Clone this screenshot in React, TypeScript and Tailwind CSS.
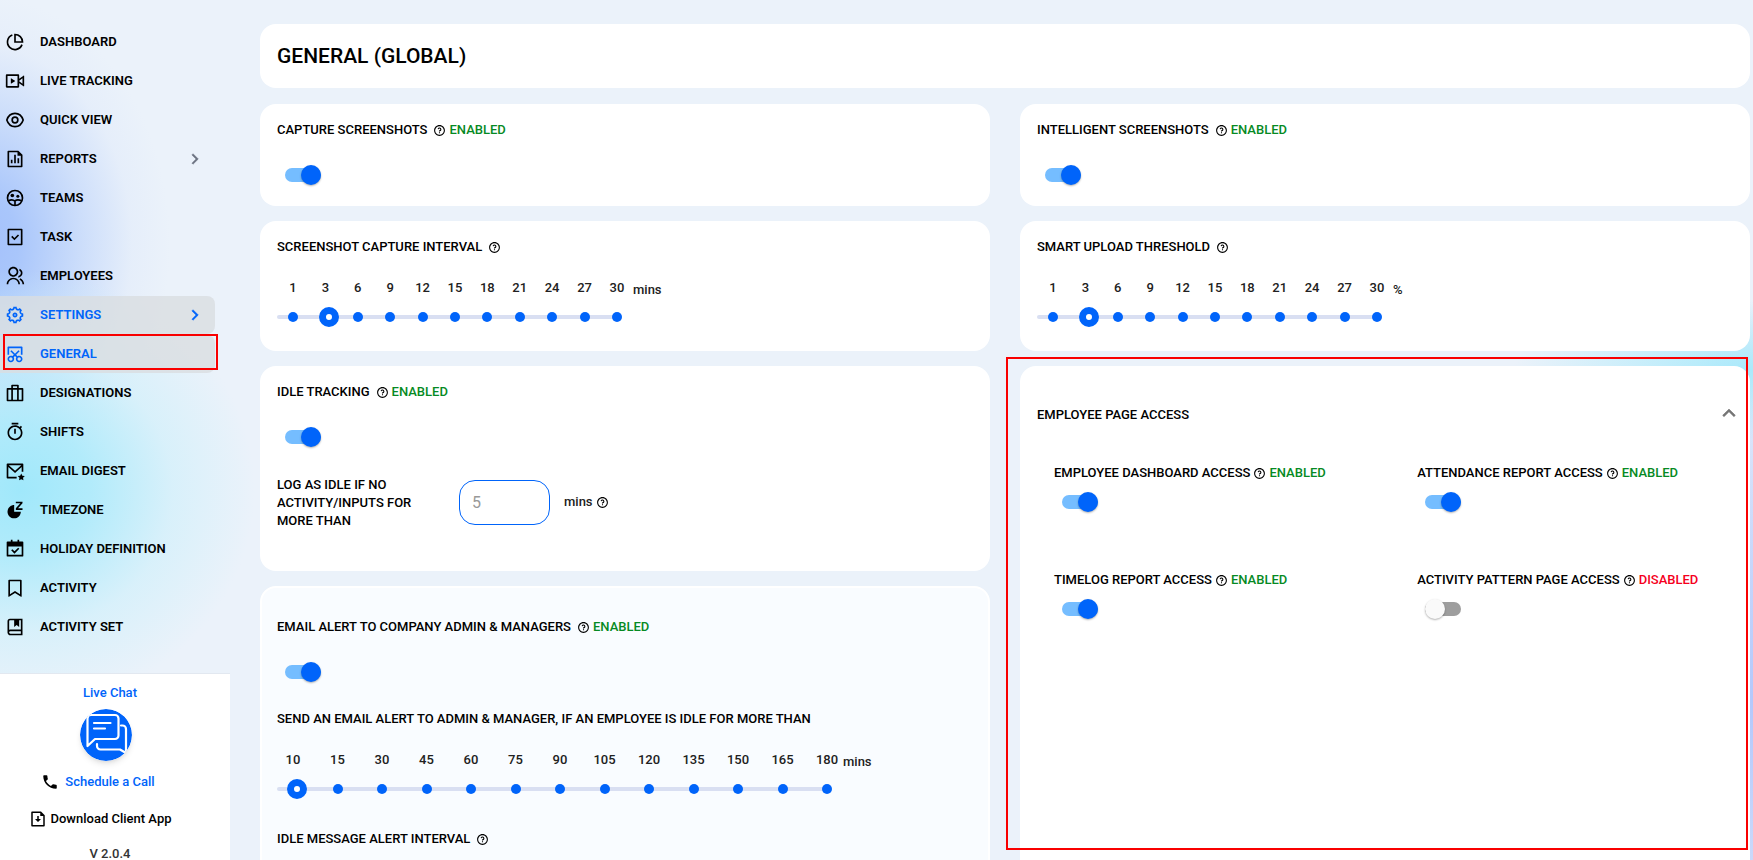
import { useState, type ReactNode, type ComponentType } from "react";
import {
  RiLiveLine,
  RiFileChartLine,
  RiTaskLine,
  RiGroupLine,
  RiSettings5Line,
  RiScreenshotLine,
  RiTimerLine,
  RiMailStarLine,
  RiRestTimeFill,
  RiBookmarkLine,
  RiFileDownloadLine,
  RiQuestionLine,
  RiArrowRightSLine,
  RiArrowUpSLine,
} from "react-icons/ri";
import { MdPhone } from "react-icons/md";

type IconProps = { className?: string };

function PieIcon({ className }: IconProps) {
  return (
    <svg viewBox="0 0 24 24" className={className} fill="none" stroke="currentColor" strokeWidth="2">
      <path d="M8.800 3.600A9 9 0 1 0 20.400 15.200" />
      <path d="M12 12V3a9 9 0 0 1 9 9z" />
    </svg>
  );
}

function EyeIcon({ className }: IconProps) {
  return (
    <svg viewBox="0 0 24 24" className={className} fill="none" stroke="currentColor" strokeWidth="2" strokeLinejoin="round">
      <path d="M2.200 12c1.600-5 5.400-8 9.800-8s8.200 3 9.800 8c-1.600 5-5.400 8-9.800 8s-8.200-3-9.800-8z" />
      <circle cx="12" cy="12" r="3.400" />
    </svg>
  );
}

function TeamsIcon({ className }: IconProps) {
  return (
    <svg viewBox="0 0 24 24" className={className} fill="none" stroke="currentColor" strokeWidth="2">
      <circle cx="12" cy="12" r="9" />
      <circle cx="8.800" cy="9" r="2.200" fill="currentColor" stroke="none" />
      <circle cx="15.400" cy="9.800" r="1.800" fill="currentColor" stroke="none" />
      <path d="M4 15.800c2.400-1.800 5.800-1.800 8 0V21M12 15.200c2-1.200 5.400-1.200 8 .4" />
    </svg>
  );
}

function SuitcaseIcon({ className }: IconProps) {
  return (
    <svg viewBox="0 0 24 24" className={className} fill="none" stroke="currentColor" strokeWidth="2" strokeLinejoin="round">
      <path d="M3 7h18v14H3z" />
      <path d="M8.500 21V3h7v18" />
    </svg>
  );
}

function CalendarCheckIcon({ className }: IconProps) {
  return (
    <svg viewBox="0 0 24 24" className={className} fill="currentColor">
      <path fillRule="evenodd" d="M7 1h2v2h6V1h2v2h4a1 1 0 0 1 1 1v16a1 1 0 0 1-1 1H3a1 1 0 0 1-1-1V4a1 1 0 0 1 1-1h4V1zM4 9v10h16V9H4z" />
      <path d="M8.800 12.200l2.600 2.600 4.400-4.400 1.400 1.400-5.800 5.800-4-4z" />
    </svg>
  );
}

function BookIcon({ className }: IconProps) {
  return (
    <svg viewBox="0 0 24 24" className={className} fill="none" stroke="currentColor" strokeWidth="2">
      <path d="M4 18.500V5a2 2 0 0 1 2-2h14v18H6.500a2.500 2.500 0 0 1 0-5H20" />
      <path d="M11 3h6v9l-3-2.500-3 2.500z" fill="currentColor" stroke="none" />
    </svg>
  );
}

type NavEntry = {
  label: string;
  icon: ComponentType<IconProps>;
  active?: boolean;
  arrow?: boolean;
  outlined?: boolean;
};

const NAV: NavEntry[] = [
  { label: "DASHBOARD", icon: PieIcon },
  { label: "LIVE TRACKING", icon: RiLiveLine },
  { label: "QUICK VIEW", icon: EyeIcon },
  { label: "REPORTS", icon: RiFileChartLine, arrow: true },
  { label: "TEAMS", icon: TeamsIcon },
  { label: "TASK", icon: RiTaskLine },
  { label: "EMPLOYEES", icon: RiGroupLine },
  { label: "SETTINGS", icon: RiSettings5Line, active: true, arrow: true },
  { label: "GENERAL", icon: RiScreenshotLine, active: true, outlined: true },
  { label: "DESIGNATIONS", icon: SuitcaseIcon },
  { label: "SHIFTS", icon: RiTimerLine },
  { label: "EMAIL DIGEST", icon: RiMailStarLine },
  { label: "TIMEZONE", icon: RiRestTimeFill },
  { label: "HOLIDAY DEFINITION", icon: CalendarCheckIcon },
  { label: "ACTIVITY", icon: RiBookmarkLine },
  { label: "ACTIVITY SET", icon: BookIcon },
];

function NavItem({ label, icon: Icon, active, arrow, outlined }: NavEntry) {
  return (
    <li className="relative">
      <a
        href="#"
        className={
          active
            ? "flex h-[38px] items-center rounded-r-lg bg-[#d9dde1]/80 pl-[5px] pr-[10px] text-[#0064fa]"
            : "flex h-[38px] items-center pl-[5px] pr-[10px] text-black"
        }
      >
        <Icon className="size-5" />
        <span className="ml-[15px] flex-1">{label}</span>
        {arrow && (
          <RiArrowRightSLine className={active ? "size-5 stroke-[0.5]" : "size-5 stroke-[0.5] text-[#6b7280]"} />
        )}
      </a>
      {outlined && (
        <span className="pointer-events-none absolute -right-[3px] -top-px bottom-[3px] left-[3px] border-2 border-[#f90000]" />
      )}
    </li>
  );
}

function ChatLogo() {
  return (
    <svg viewBox="0 0 52 52" className="size-[52px] rounded-full shadow-md" fill="none" stroke="#fff" strokeWidth="2.2" strokeLinecap="round" strokeLinejoin="round">
      <circle cx="26" cy="26" r="26" fill="#0064fa" stroke="none" />
      <path d="M7.500 37V9.500a3.500 3.500 0 0 1 3.500-3.500h24a3.500 3.500 0 0 1 3.500 3.500v17a3.500 3.500 0 0 1-3.500 3.500H15z" />
      <path d="M41 16.500h1.500a3.500 3.500 0 0 1 3.500 3.500V44l-6-3.500H20.500a3.500 3.500 0 0 1-3.500-3.500V35" />
      <path d="M14 14h16.500M14 19.500h11" />
    </svg>
  );
}

function Sidebar() {
  return (
    <aside className="flex w-[230px] shrink-0 flex-col text-[13px] font-semibold">
      <nav className="flex-1 overflow-hidden pr-[15px] pt-[23px]">
        <ul className="flex flex-col gap-px">
          {NAV.map((entry) => (
            <NavItem key={entry.label} {...entry} />
          ))}
        </ul>
      </nav>
      <div className="flex h-[187px] flex-col items-center border-t border-[#e2e8f0] bg-white pr-[10px] pt-[9px] font-medium leading-5">
        <a href="#" className="text-[#0064fa]">Live Chat</a>
        <button type="button" aria-label="Live chat" className="mr-2 mt-[6px]">
          <ChatLogo />
        </button>
        <a href="#" className="mr-6 mt-[11px] flex items-center gap-[6px] text-[#0064fa]">
          <MdPhone className="size-[18px] text-black" />
          Schedule a Call
        </a>
        <a href="#" className="mr-5 mt-[17px] flex items-center gap-1 text-black">
          <RiFileDownloadLine className="size-[18px]" />
          Download Client App
        </a>
        <span className="mt-[17px] leading-[15px] text-[#333]">V 2.0.4</span>
      </div>
    </aside>
  );
}

function Help({ label }: { label: string }) {
  return (
    <button type="button" aria-label={`Help: ${label}`} className="flex">
      <RiQuestionLine className="size-[13px]" />
    </button>
  );
}

function Toggle({ id, defaultOn }: { id: string; defaultOn: boolean }) {
  return (
    <input
      id={id}
      type="checkbox"
      role="switch"
      defaultChecked={defaultOn}
      className="relative ml-2 block h-[14px] w-9 appearance-none rounded-full bg-[#9e9e9e] before:absolute before:-top-[3px] before:left-0 before:size-5 before:rounded-full before:bg-[#fafafa] before:shadow-[0_1px_2px_rgba(0,0,0,0.3)] checked:bg-[#75bdff] checked:before:left-4 checked:before:bg-[#0064fa]"
    />
  );
}

function SettingTitle({ id, label, on, tight }: { id?: string; label: string; on?: boolean; tight?: boolean }) {
  return (
    <div className="flex h-[18px] items-center">
      {id ? <label htmlFor={id}>{label}</label> : <h2>{label}</h2>}
      <span className={tight ? "ml-[3px] flex" : "ml-[6px] flex"}>
        <Help label={label} />
      </span>
      {on !== undefined && (
        <span className={on ? "ml-[3px] text-[#068a23]" : "ml-[3px] text-[#f5001d]"}>{on ? "ENABLED" : "DISABLED"}</span>
      )}
    </div>
  );
}

function Card({ children, className = "pb-6" }: { children: ReactNode; className?: string }) {
  return <section className={`rounded-2xl bg-white px-[17px] pt-[17px] ${className}`}>{children}</section>;
}

function StepSlider({ steps, start, unit, label, wide }: { steps: number[]; start: number; unit: string; label: string; wide?: boolean }) {
  const [index, setIndex] = useState(start);
  return (
    <div className="flex items-start text-[#212121]">
      <div className={wide ? "w-[566px]" : "w-[356px]"}>
        <div className="flex h-[18px] justify-between">
          {steps.map((s) => (
            <span key={s} className="w-8 text-center leading-[18px]">{s}</span>
          ))}
        </div>
        <div className="mt-[10px] grid h-5 items-center">
          <div className="col-start-1 row-start-1 mr-4 h-1 rounded-full bg-[#d9dff2]" />
          <div className="col-start-1 row-start-1 flex justify-between">
            {steps.map((s, i) => (
              <span key={s} className="flex w-8 justify-center">
                <span className={i === index ? "size-[10px]" : "size-[10px] rounded-full bg-[#0064fa]"} />
              </span>
            ))}
          </div>
          <input
            type="range"
            aria-label={label}
            min={0}
            max={steps.length - 1}
            value={index}
            onChange={(e) => setIndex(Number(e.target.value))}
            className="col-start-1 row-start-1 ml-[10px] mr-[6px] h-5 appearance-none bg-transparent [&::-webkit-slider-thumb]:size-5 [&::-webkit-slider-thumb]:appearance-none [&::-webkit-slider-thumb]:rounded-full [&::-webkit-slider-thumb]:border-[7px] [&::-webkit-slider-thumb]:border-[#0064fa] [&::-webkit-slider-thumb]:bg-white"
          />
        </div>
      </div>
      <span className="mt-[2px] leading-[18px]">{unit}</span>
    </div>
  );
}

const UP_TO_30 = [1, 3, 6, 9, 12, 15, 18, 21, 24, 27, 30];
const IDLE_STEPS = [10, 15, 30, 45, 60, 75, 90, 105, 120, 135, 150, 165, 180];

const ACCESS = [
  { id: "dashboard-access", label: "EMPLOYEE DASHBOARD ACCESS", on: true },
  { id: "attendance-access", label: "ATTENDANCE REPORT ACCESS", on: true },
  { id: "timelog-access", label: "TIMELOG REPORT ACCESS", on: true },
  { id: "pattern-access", label: "ACTIVITY PATTERN PAGE ACCESS", on: false },
];

function LeftColumn() {
  return (
    <div className="flex flex-col gap-[15px]">
      <Card>
        <SettingTitle id="capture" label="CAPTURE SCREENSHOTS" on />
        <div className="mt-[29px]">
          <Toggle id="capture" defaultOn />
        </div>
      </Card>
      <Card>
        <SettingTitle label="SCREENSHOT CAPTURE INTERVAL" />
        <div className="mt-[23px]">
          <StepSlider steps={UP_TO_30} start={1} unit="mins" label="Screenshot capture interval" />
        </div>
      </Card>
      <Card className="pb-[41px]">
        <SettingTitle id="idle" label="IDLE TRACKING" on />
        <div className="mt-[29px]">
          <Toggle id="idle" defaultOn />
        </div>
        <div className="mt-[32px] flex items-center">
          <label htmlFor="idle-minutes" className="w-[140px] leading-[18px]">
            LOG AS IDLE IF NO ACTIVITY/INPUTS FOR MORE THAN
          </label>
          <div className="mb-[2px] flex items-center">
            <input
              id="idle-minutes"
              type="text"
              placeholder="5"
              className="ml-[42px] h-[45px] w-[91px] rounded-2xl border border-[#0064fa] px-3 text-base font-normal placeholder:text-[#999]"
            />
            <span className="ml-[14px] mr-[3px] text-[#212121]">mins</span>
            <Help label="idle minutes" />
          </div>
        </div>
      </Card>
      <Card className="border-2 border-white bg-[#f9fcff]! px-[15px]! pt-[30px]!">
        <SettingTitle id="email" label="EMAIL ALERT TO COMPANY ADMIN & MANAGERS" on />
        <div className="mt-[29px]">
          <Toggle id="email" defaultOn />
        </div>
        <h3 className="mb-[23px] mt-[31px] leading-[18px]">
          SEND AN EMAIL ALERT TO ADMIN &amp; MANAGER, IF AN EMPLOYEE IS IDLE FOR MORE THAN
        </h3>
        <StepSlider steps={IDLE_STEPS} start={0} unit="mins" label="Idle alert threshold" wide />
        <div className="mb-20 mt-[31px]">
          <SettingTitle label="IDLE MESSAGE ALERT INTERVAL" />
        </div>
      </Card>
    </div>
  );
}

function RightColumn() {
  return (
    <div className="flex min-h-0 flex-col gap-[15px]">
      <Card>
        <SettingTitle id="intelligent" label="INTELLIGENT SCREENSHOTS" on />
        <div className="mt-[29px]">
          <Toggle id="intelligent" defaultOn />
        </div>
      </Card>
      <Card>
        <SettingTitle label="SMART UPLOAD THRESHOLD" />
        <div className="mt-[23px]">
          <StepSlider steps={UP_TO_30} start={1} unit="%" label="Smart upload threshold" />
        </div>
      </Card>
      <section className="relative flex-1 rounded-t-2xl bg-white px-[17px] pt-[35px]">
        <button type="button" className="flex w-full items-center justify-between text-left leading-[18px]">
          EMPLOYEE PAGE ACCESS
          <RiArrowUpSLine className="-mr-2 mb-1 size-6 stroke-[0.5] text-[#757575]" />
        </button>
        <div className="grid grid-cols-[minmax(0,23fr)_minmax(0,20fr)] gap-y-[62px] pl-[17px] pt-[35px]">
          {ACCESS.map((a) => (
            <div key={a.id}>
              <SettingTitle id={a.id} label={a.label} on={a.on} tight />
              <div className="mt-[13px]">
                <Toggle id={a.id} defaultOn={a.on} />
              </div>
            </div>
          ))}
        </div>
        <span className="pointer-events-none absolute -left-[14px] -top-[9px] bottom-[10px] right-[2px] border-2 border-[#f90000]" />
      </section>
    </div>
  );
}

export default function App() {
  return (
    <div className="flex h-screen overflow-hidden bg-[#ebf2fa] bg-[radial-gradient(ellipse_235px_220px_at_20px_490px,#a0e8fb_0%,#a9eafbdd_30%,#c8effb88_65%,transparent_100%),radial-gradient(ellipse_190px_250px_at_-20px_245px,#a4c0fb_0%,#a9c6fb_20%,#bfd5fbaa_55%,#dde8fb66_80%,transparent_100%),radial-gradient(ellipse_240px_70px_at_100%_370px,#a9eafb_0%,transparent_100%),radial-gradient(ellipse_100px_400px_at_100%_700px,#b4c8fb_0%,transparent_100%)] font-['Roboto',sans-serif] text-[13px] font-medium text-black">
      <Sidebar />
      <main className="flex min-w-0 flex-1 flex-col gap-4 pl-[30px] pr-[3px] pt-6">
        <header className="flex h-16 shrink-0 items-center rounded-2xl bg-white px-[17px]">
          <h1 className="pt-px text-[21px]">GENERAL (GLOBAL)</h1>
        </header>
        <div className="grid min-h-0 flex-1 grid-cols-2 grid-rows-[minmax(0,1fr)] gap-[30px]">
          <LeftColumn />
          <RightColumn />
        </div>
      </main>
    </div>
  );
}
